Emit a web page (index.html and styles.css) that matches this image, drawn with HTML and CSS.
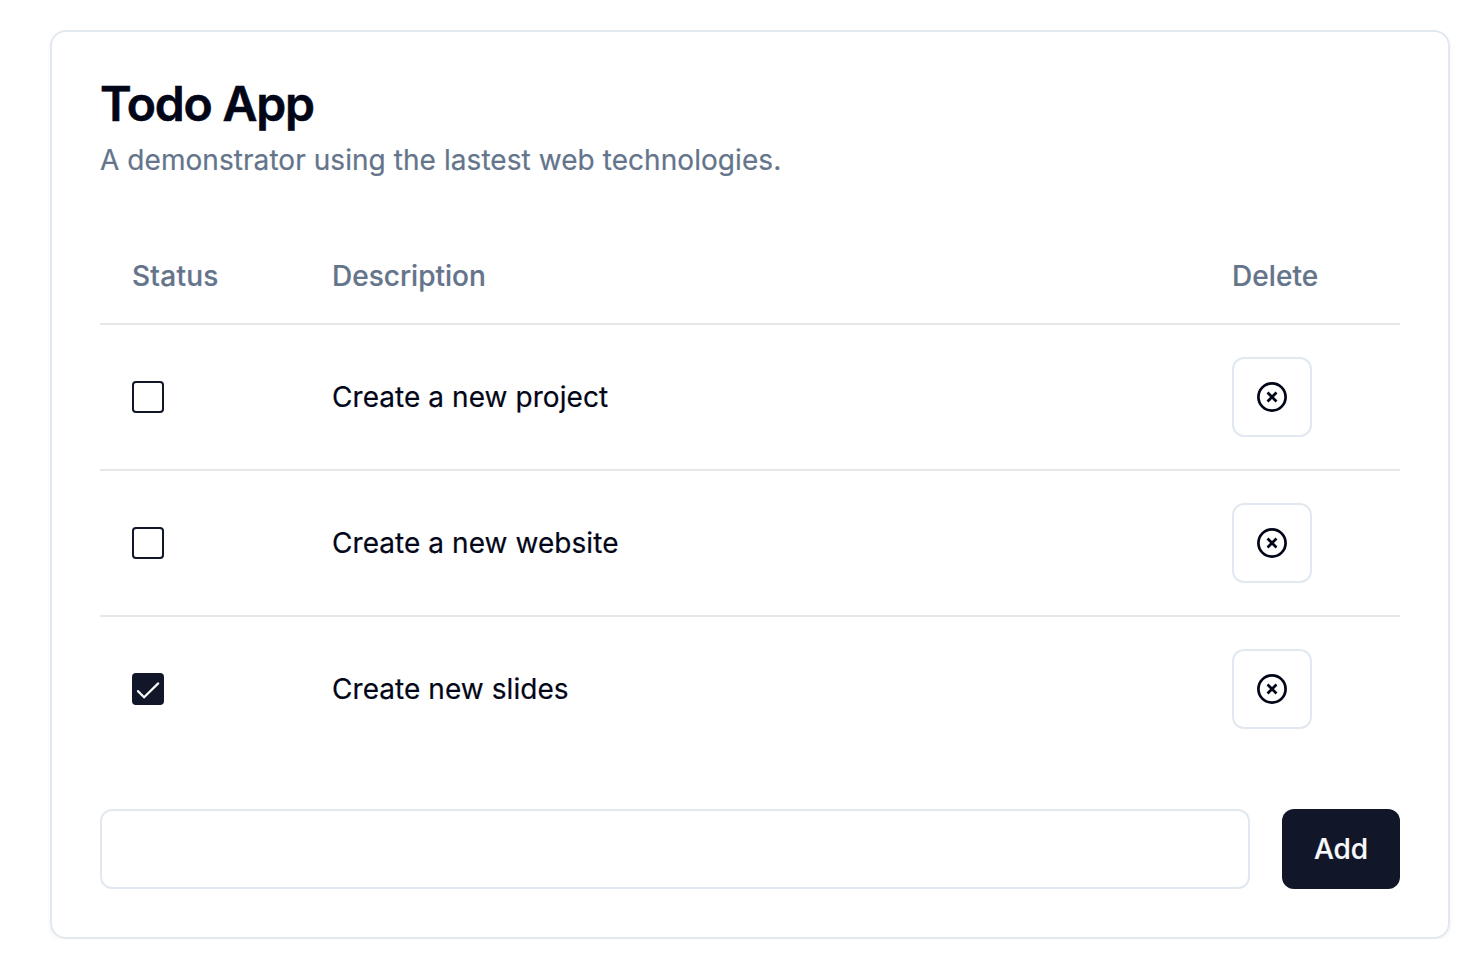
FILE: index.html
```html
<!DOCTYPE html>
<html lang="en">
<head>
<meta charset="utf-8">
<title>Todo App</title>
<link rel="stylesheet" href="styles.css">
</head>
<body>
<main class="card">
  <header class="card-header">
    <h1 class="title">Todo App</h1>
    <p class="subtitle">A demonstrator using the lastest web technologies.</p>
  </header>
  <section class="todo-list">
    <div class="row row-head"><span class="head-status">Status</span><span class="head-description">Description</span><span>Delete</span></div>
    <div class="row">
      <span class="checkbox"></span>
      <span>Create a new project</span>
      <button class="delete" aria-label="Delete"><svg class="icon" viewBox="0 0 32 32"><circle cx="16" cy="16" r="13.6"/><path d="M11.5 11.5l9 9m0-9l-9 9"/></svg></button>
    </div>
    <div class="row">
      <span class="checkbox"></span>
      <span>Create a new website</span>
      <button class="delete" aria-label="Delete"><svg class="icon" viewBox="0 0 32 32"><circle cx="16" cy="16" r="13.6"/><path d="M11.5 11.5l9 9m0-9l-9 9"/></svg></button>
    </div>
    <div class="row">
      <span class="checkbox checked"><svg class="check" viewBox="0 0 28 28"><path d="M3.9 16.1l6.2 6.2L24.2 8.4"/></svg></span>
      <span>Create new slides</span>
      <button class="delete" aria-label="Delete"><svg class="icon" viewBox="0 0 32 32"><circle cx="16" cy="16" r="13.6"/><path d="M11.5 11.5l9 9m0-9l-9 9"/></svg></button>
    </div>
  </section>
  <form class="add-form">
    <input class="field" type="text" aria-label="New todo">
    <button class="add" type="button">Add</button>
  </form>
</main>
</body>
</html>
```

FILE: styles.css
```css
* { box-sizing: border-box; }
body {
  margin: 0;
  padding: 30px 14px 0 50px;
  background: #fff;
  color: #020617;
  font: 400 28px/40px Inter, sans-serif;
  letter-spacing: 0.06px;
  -webkit-text-stroke: 0.2px currentColor;
}
.card {
  height: 909px;
  padding: 48px;
  border: 2px solid #e2e8f0;
  border-radius: 16px;
  box-shadow: 0 2px 4px rgba(0, 0, 0, 0.05);
}
.title {
  margin: 0;
  font-size: 48px;
  line-height: 48px;
  font-weight: 600;
  letter-spacing: -1.2px;
  -webkit-text-stroke: 0.6px currentColor;
}
.subtitle { margin: 12px 0 0; color: #64748b; }
.todo-list { margin-top: 48px; }
.row {
  display: grid;
  grid-template-columns: 200px 900px 1fr;
  align-items: center;
  height: 146px;
  padding-left: 32px;
  border-bottom: 2px solid #e5e7eb;
}
.row:last-child { border-bottom: 0; height: 144px; }
.row-head { height: 97px; color: #64748b; font-weight: 500; }
.head-status { letter-spacing: 0.25px; }
.head-description { letter-spacing: 0; }
.checkbox {
  display: flex;
  width: 32px;
  height: 32px;
  border: 2px solid #111628;
  border-radius: 4px;
}
.checked { background: #111628; }
.check {
  width: 28px;
  height: 28px;
  fill: none;
  stroke: #f8fafc;
  stroke-width: 2.2;
  stroke-linecap: round;
}
.delete {
  display: flex;
  align-items: center;
  justify-content: center;
  width: 80px;
  height: 80px;
  padding: 0;
  border: 2px solid #e2e8f0;
  border-radius: 12px;
  background: #fff;
}
.icon { width: 32px; height: 32px; fill: none; stroke: #020617; stroke-width: 2.7; }
.add-form { display: flex; gap: 32px; margin-top: 48px; }
.field {
  flex: 1;
  height: 80px;
  border: 2px solid #e2e8f0;
  border-radius: 12px;
  background: #fff;
}
.add {
  width: 118px;
  height: 80px;
  padding: 0;
  border: 0;
  border-radius: 12px;
  background: #111628;
  color: #f8fafc;
  font: 500 28px/40px Inter, sans-serif;
}
```
